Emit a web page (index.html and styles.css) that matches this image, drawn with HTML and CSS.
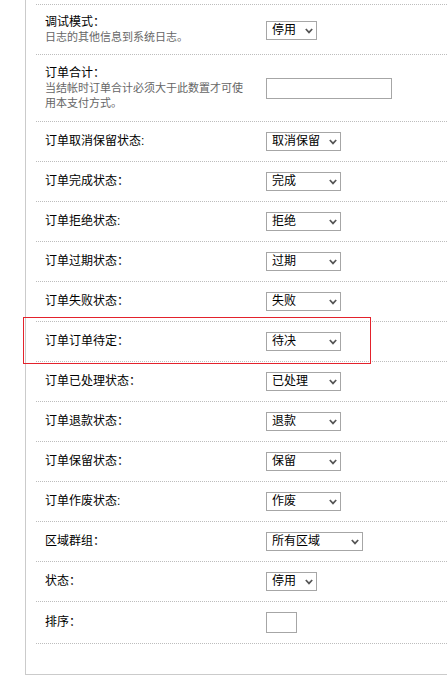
FILE: index.html
```html
<!DOCTYPE html>
<html lang="zh-CN">
<head>
<meta charset="utf-8">
<title>支付方式设置</title>
<link rel="stylesheet" href="styles.css">
</head>
<body>
<div class="panel">
  <div class="form">
    <div class="row row-first">
      <div class="label">
        <div class="title">调试模式：</div>
        <div class="desc">日志的其他信息到系统日志。</div>
      </div>
      <div class="field">
        <span class="sel w-s"><select><option>停用</option><option>启用</option></select><svg class="arrow" width="8" height="6" viewBox="0 0 8 6"><polyline points="0.8,1 4,4.4 7.2,1" fill="none" stroke="#555" stroke-width="1.7"/></svg></span>
      </div>
    </div>
    <div class="row row-tall">
      <div class="label">
        <div class="title">订单合计：</div>
        <div class="desc">当结帐时订单合计必须大于此数置才可使用本支付方式。</div>
      </div>
      <div class="field"><input class="text w-text" type="text"></div>
    </div>
    <div class="row">
      <div class="label"><div class="title">订单取消保留状态:</div></div>
      <div class="field"><span class="sel w-m"><select><option>取消保留</option></select><svg class="arrow" width="8" height="6" viewBox="0 0 8 6"><polyline points="0.8,1 4,4.4 7.2,1" fill="none" stroke="#555" stroke-width="1.7"/></svg></span></div>
    </div>
    <div class="row">
      <div class="label"><div class="title">订单完成状态：</div></div>
      <div class="field"><span class="sel w-m"><select><option>完成</option></select><svg class="arrow" width="8" height="6" viewBox="0 0 8 6"><polyline points="0.8,1 4,4.4 7.2,1" fill="none" stroke="#555" stroke-width="1.7"/></svg></span></div>
    </div>
    <div class="row">
      <div class="label"><div class="title">订单拒绝状态:</div></div>
      <div class="field"><span class="sel w-m"><select><option>拒绝</option></select><svg class="arrow" width="8" height="6" viewBox="0 0 8 6"><polyline points="0.8,1 4,4.4 7.2,1" fill="none" stroke="#555" stroke-width="1.7"/></svg></span></div>
    </div>
    <div class="row">
      <div class="label"><div class="title">订单过期状态：</div></div>
      <div class="field"><span class="sel w-m"><select><option>过期</option></select><svg class="arrow" width="8" height="6" viewBox="0 0 8 6"><polyline points="0.8,1 4,4.4 7.2,1" fill="none" stroke="#555" stroke-width="1.7"/></svg></span></div>
    </div>
    <div class="row">
      <div class="label"><div class="title">订单失败状态：</div></div>
      <div class="field"><span class="sel w-m"><select><option>失败</option></select><svg class="arrow" width="8" height="6" viewBox="0 0 8 6"><polyline points="0.8,1 4,4.4 7.2,1" fill="none" stroke="#555" stroke-width="1.7"/></svg></span></div>
    </div>
    <div class="row row-marked">
      <div class="highlight"></div>
      <div class="label"><div class="title">订单订单待定：</div></div>
      <div class="field"><span class="sel w-m"><select><option>待决</option></select><svg class="arrow" width="8" height="6" viewBox="0 0 8 6"><polyline points="0.8,1 4,4.4 7.2,1" fill="none" stroke="#555" stroke-width="1.7"/></svg></span></div>
    </div>
    <div class="row">
      <div class="label"><div class="title">订单已处理状态：</div></div>
      <div class="field"><span class="sel w-m"><select><option>已处理</option></select><svg class="arrow" width="8" height="6" viewBox="0 0 8 6"><polyline points="0.8,1 4,4.4 7.2,1" fill="none" stroke="#555" stroke-width="1.7"/></svg></span></div>
    </div>
    <div class="row">
      <div class="label"><div class="title">订单退款状态：</div></div>
      <div class="field"><span class="sel w-m"><select><option>退款</option></select><svg class="arrow" width="8" height="6" viewBox="0 0 8 6"><polyline points="0.8,1 4,4.4 7.2,1" fill="none" stroke="#555" stroke-width="1.7"/></svg></span></div>
    </div>
    <div class="row">
      <div class="label"><div class="title">订单保留状态：</div></div>
      <div class="field"><span class="sel w-m"><select><option>保留</option></select><svg class="arrow" width="8" height="6" viewBox="0 0 8 6"><polyline points="0.8,1 4,4.4 7.2,1" fill="none" stroke="#555" stroke-width="1.7"/></svg></span></div>
    </div>
    <div class="row">
      <div class="label"><div class="title">订单作废状态:</div></div>
      <div class="field"><span class="sel w-m"><select><option>作废</option></select><svg class="arrow" width="8" height="6" viewBox="0 0 8 6"><polyline points="0.8,1 4,4.4 7.2,1" fill="none" stroke="#555" stroke-width="1.7"/></svg></span></div>
    </div>
    <div class="row">
      <div class="label"><div class="title">区域群组：</div></div>
      <div class="field"><span class="sel w-l"><select><option>所有区域</option></select><svg class="arrow" width="8" height="6" viewBox="0 0 8 6"><polyline points="0.8,1 4,4.4 7.2,1" fill="none" stroke="#555" stroke-width="1.7"/></svg></span></div>
    </div>
    <div class="row">
      <div class="label"><div class="title">状态：</div></div>
      <div class="field"><span class="sel w-s"><select><option>停用</option><option>启用</option></select><svg class="arrow" width="8" height="6" viewBox="0 0 8 6"><polyline points="0.8,1 4,4.4 7.2,1" fill="none" stroke="#555" stroke-width="1.7"/></svg></span></div>
    </div>
    <div class="row">
      <div class="label"><div class="title">排序：</div></div>
      <div class="field"><input class="text w-sort" type="text"></div>
    </div>
  </div>
</div>
</body>
</html>
```
FILE: styles.css
```css
html, body {
  margin: 0;
  padding: 0;
  background: #fff;
  overflow: hidden;
}

body {
  font-family: "Liberation Sans", "Noto Sans CJK SC", sans-serif;
  font-size: 12px;
  color: #000;
}

.panel {
  margin-left: 25px;
  border-left: 1px solid #cbcbcb;
  border-bottom: 1px solid #cbcbcb;
  padding: 4px 0 30px 10px;
}

.form {
  border-top: 1px dotted #bdbdbd;
}

.row {
  position: relative;
  display: flex;
  align-items: center;
  padding: 10px 0;
  border-bottom: 1px dotted #bdbdbd;
}

.row-first {
  padding-bottom: 9px;
}

.row-tall {
  padding-top: 11px;
}

.label {
  width: 230px;
  box-sizing: border-box;
  padding: 0 20px 0 9px;
  flex: none;
}

.title {
  font-size: 12px;
  line-height: 15px;
  color: #000;
}

.desc {
  font-size: 11px;
  line-height: 15px;
  color: #666;
}

.field {
  display: flex;
  align-items: center;
}

.sel {
  position: relative;
  display: inline-block;
  height: 19px;
}

.sel select {
  -webkit-appearance: none;
  appearance: none;
  display: block;
  width: 100%;
  height: 19px;
  box-sizing: border-box;
  margin: 0;
  padding: 0 0 0 5px;
  border: 1px solid #a6a6a6;
  border-radius: 0;
  background: #fff;
  font-family: "Liberation Sans", "Noto Sans CJK SC", sans-serif;
  font-size: 12px;
  line-height: 17px;
  color: #000;
  outline: none;
}

.sel .arrow {
  position: absolute;
  right: 4px;
  top: 7px;
  pointer-events: none;
}

.w-s { width: 51px; }
.w-m { width: 75px; }
.w-l { width: 97px; }

.text {
  display: block;
  height: 21px;
  box-sizing: border-box;
  margin: 0;
  padding: 0 4px;
  border: 1px solid #a6a6a6;
  border-radius: 0;
  background: #fff;
  font-size: 12px;
  outline: none;
}

.w-text { width: 126px; }
.w-sort { width: 31px; }

.highlight {
  position: absolute;
  left: -13px;
  top: -5px;
  width: 348px;
  height: 47px;
  box-sizing: border-box;
  border: 1px solid #e3222c;
  pointer-events: none;
}
```
